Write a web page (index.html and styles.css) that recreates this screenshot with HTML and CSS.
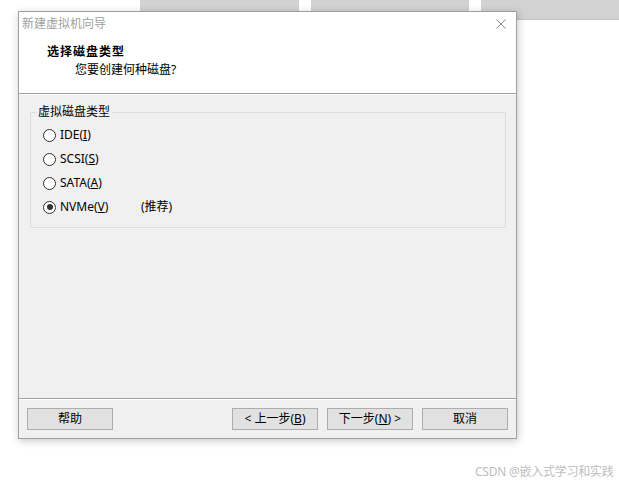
FILE: index.html
```html
<!DOCTYPE html>
<html lang="zh-CN">
<head>
<meta charset="utf-8">
<title>新建虚拟机向导</title>
<link rel="stylesheet" href="styles.css">
</head>
<body>
<div class="desktop">
  <div class="bgwin bgwin-1"></div>
  <div class="bgwin bgwin-2"></div>
  <div class="bgwin bgwin-3"></div>

  <div class="dialog">
    <div class="top">
      <div class="titlebar">
        <span class="title">新建虚拟机向导</span>
        <svg class="close" width="10" height="10" viewBox="0 0 10 10"><path d="M0.5 0.5 L9.5 9.5 M9.5 0.5 L0.5 9.5" stroke="#8a8a8a" stroke-width="1" fill="none"/></svg>
      </div>
      <div class="heading">选择磁盘类型</div>
      <div class="subheading">您要创建何种磁盘?</div>
    </div>
    <div class="sep"></div>
    <div class="content">
      <fieldset class="group">
        <legend>虚拟磁盘类型</legend>
        <label class="radio"><span class="radio-btn"></span><span class="radio-text">IDE(<u>I</u>)</span></label>
        <label class="radio"><span class="radio-btn"></span><span class="radio-text">SCSI(<u>S</u>)</span></label>
        <label class="radio"><span class="radio-btn"></span><span class="radio-text">SATA(<u>A</u>)</span></label>
        <label class="radio"><span class="radio-btn checked"></span><span class="radio-text">NVMe(<u>V</u>)</span><span class="note">(推荐)</span></label>
      </fieldset>
    </div>
    <div class="sep"></div>
    <div class="footer">
      <button class="btn btn-help">帮助</button>
      <button class="btn">&lt; 上一步(<u>B</u>)</button>
      <button class="btn">下一步(<u>N</u>) &gt;</button>
      <button class="btn">取消</button>
    </div>
  </div>

  <div class="watermark">CSDN @嵌入式学习和实践</div>
</div>
</body>
</html>
```

FILE: styles.css
```css
* { box-sizing: border-box; }
html, body { margin: 0; padding: 0; }
body {
  background: #fff;
  font-family: "Noto Sans", "Noto Sans CJK SC", sans-serif;
  font-size: 12px;
  color: #000;
}
.desktop {
  position: relative;
  width: 619px;
  height: 484px;
  overflow: hidden;
}
.bgwin {
  position: absolute;
  top: 0;
  height: 20px;
  background: #d2d2d2;
  border-bottom: 1px solid #c4c4c4;
}
.bgwin-1 { left: 140px; width: 159px; }
.bgwin-2 { left: 311px; width: 158px; }
.bgwin-3 { left: 481px; width: 138px; }

.dialog {
  position: absolute;
  left: 18px;
  top: 11px;
  width: 499px;
  height: 428px;
  border: 1px solid #a0a0a0;
  background: #f0f0f0;
  box-shadow: 1px 2px 8px rgba(0, 0, 0, 0.22);
  display: flex;
  flex-direction: column;
}
.top {
  height: 81px;
  background: #fff;
  flex: none;
}
.titlebar {
  height: 24px;
  display: flex;
  align-items: center;
  justify-content: space-between;
  padding: 0 10px 0 3px;
}
.title {
  color: #a0a0a0;
  line-height: 16px;
}
.close { display: block; }
.heading {
  margin-top: 8px;
  padding-left: 28px;
  font-weight: bold;
  line-height: 16px;
  letter-spacing: 1px;
}
.subheading {
  margin-top: 2px;
  padding-left: 56px;
  line-height: 16px;
}
.sep {
  height: 2px;
  flex: none;
  border-top: 1px solid #a0a0a0;
  border-bottom: 1px solid #fff;
}
.content {
  height: 303px;
  flex: none;
  padding: 9px 0 0 11px;
}
.group {
  margin: 0;
  width: 476px;
  border: 1px solid #dcdcdc;
  padding: 3px 12px 8px;
}
.group legend {
  margin-left: -7px;
  padding: 0 2px;
  line-height: 16px;
}
.radio {
  display: flex;
  align-items: center;
  height: 24px;
}
.radio-btn {
  width: 13px;
  height: 13px;
  border: 1px solid #333;
  border-radius: 50%;
  background: #fff;
  display: flex;
  align-items: center;
  justify-content: center;
  margin-right: 4px;
  flex: none;
}
.radio-btn.checked::after {
  content: "";
  width: 6px;
  height: 6px;
  border-radius: 50%;
  background: #333;
}
.radio-text {
  line-height: 16px;
}
.radio .radio-text:has(+ .note) {
  width: 81px;
}
.note { line-height: 16px; }

.footer {
  height: 38px;
  flex: none;
  padding: 8px 8px 0;
  display: flex;
  align-items: flex-start;
  gap: 9px;
}
.btn {
  width: 86px;
  height: 22px;
  margin: 0;
  padding: 0;
  border: 1px solid #adadad;
  background: #e1e1e1;
  font-family: inherit;
  font-size: 12px;
  color: #000;
  line-height: 16px;
}
.btn-help { margin-right: auto; }

.watermark {
  position: absolute;
  left: 475px;
  top: 464px;
  line-height: 16px;
  color: #bdbdbd;
  white-space: nowrap;
  letter-spacing: -0.25px;
}
```
